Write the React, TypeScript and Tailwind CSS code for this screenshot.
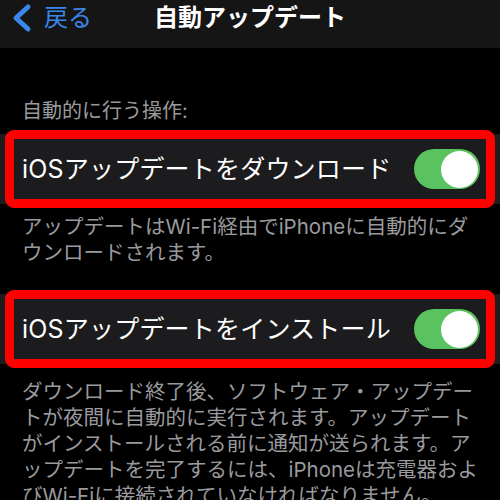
import React from "react";

const font = { fontFamily: '"Inter","Noto Sans CJK JP",sans-serif' };

function Toggle() {
  return (
    <div className="absolute right-[20px] top-1/2 -translate-y-1/2 w-[66px] h-[40px] rounded-full bg-[#5bc260] flex items-center justify-end pr-[2px]">
      <div className="w-[37px] h-[37px] rounded-full bg-white" />
    </div>
  );
}

function Row({ label }: { label: string }) {
  return (
    <div className="relative h-[70px] bg-[#1c1c1e] flex items-center pl-[22px]">
      <span className="text-[25px] leading-none text-white tracking-[0.2px]">{label}</span>
      <Toggle />
      <div className="absolute left-[5px] right-[5px] -top-[4px] -bottom-[4px] border-[9px] border-[#ff0000] rounded-[9px] pointer-events-none" />
    </div>
  );
}

export default function App() {
  return (
    <div className="w-[500px] h-[500px] bg-black overflow-hidden" style={font}>
      <div className="relative h-[48px] bg-[#151515]">
        <div className="absolute left-[10px] top-[3px] flex items-center gap-[10px] h-[30px]">
          <svg width="24" height="30" viewBox="0 0 24 30">
            <path d="M18 4 L6 15 L18 26" fill="none" stroke="#3b86e8" strokeWidth="5" strokeLinecap="round" strokeLinejoin="round" />
          </svg>
          <span className="text-[24px] leading-[30px] text-[#3b86e8]">戻る</span>
        </div>
        <div className="pt-[3px] text-center text-[24px] leading-[30px] font-semibold text-white">
          自動アップデート
        </div>
      </div>
      <div className="pt-[50px]">
        <div className="pl-[22px] text-[20px] leading-[26px] text-[#9a9a9e]">自動的に行う操作:</div>
        <div className="mt-[10px]">
          <Row label="iOSアップデートをダウンロード" />
        </div>
        <div className="mt-[10px] pl-[22px] text-[20.5px] leading-[26px] text-[#9a9a9e] whitespace-nowrap">
          <div>アップデートはWi-Fi経由でiPhoneに自動的にダ</div>
          <div>ウンロードされます。</div>
        </div>
        <div className="mt-[28px]">
          <Row label="iOSアップデートをインストール" />
        </div>
        <div className="mt-[15px] pl-[22px] text-[20.5px] leading-[26px] text-[#9a9a9e] whitespace-nowrap">
          <div>ダウンロード終了後、ソフトウェア・アップデー</div>
          <div>トが夜間に自動的に実行されます。アップデート</div>
          <div>がインストールされる前に通知が送られます。ア</div>
          <div>ップデートを完了するには、iPhoneは充電器およ</div>
          <div>びWi-Fiに接続されていなければなりません。</div>
        </div>
      </div>
    </div>
  );
}
